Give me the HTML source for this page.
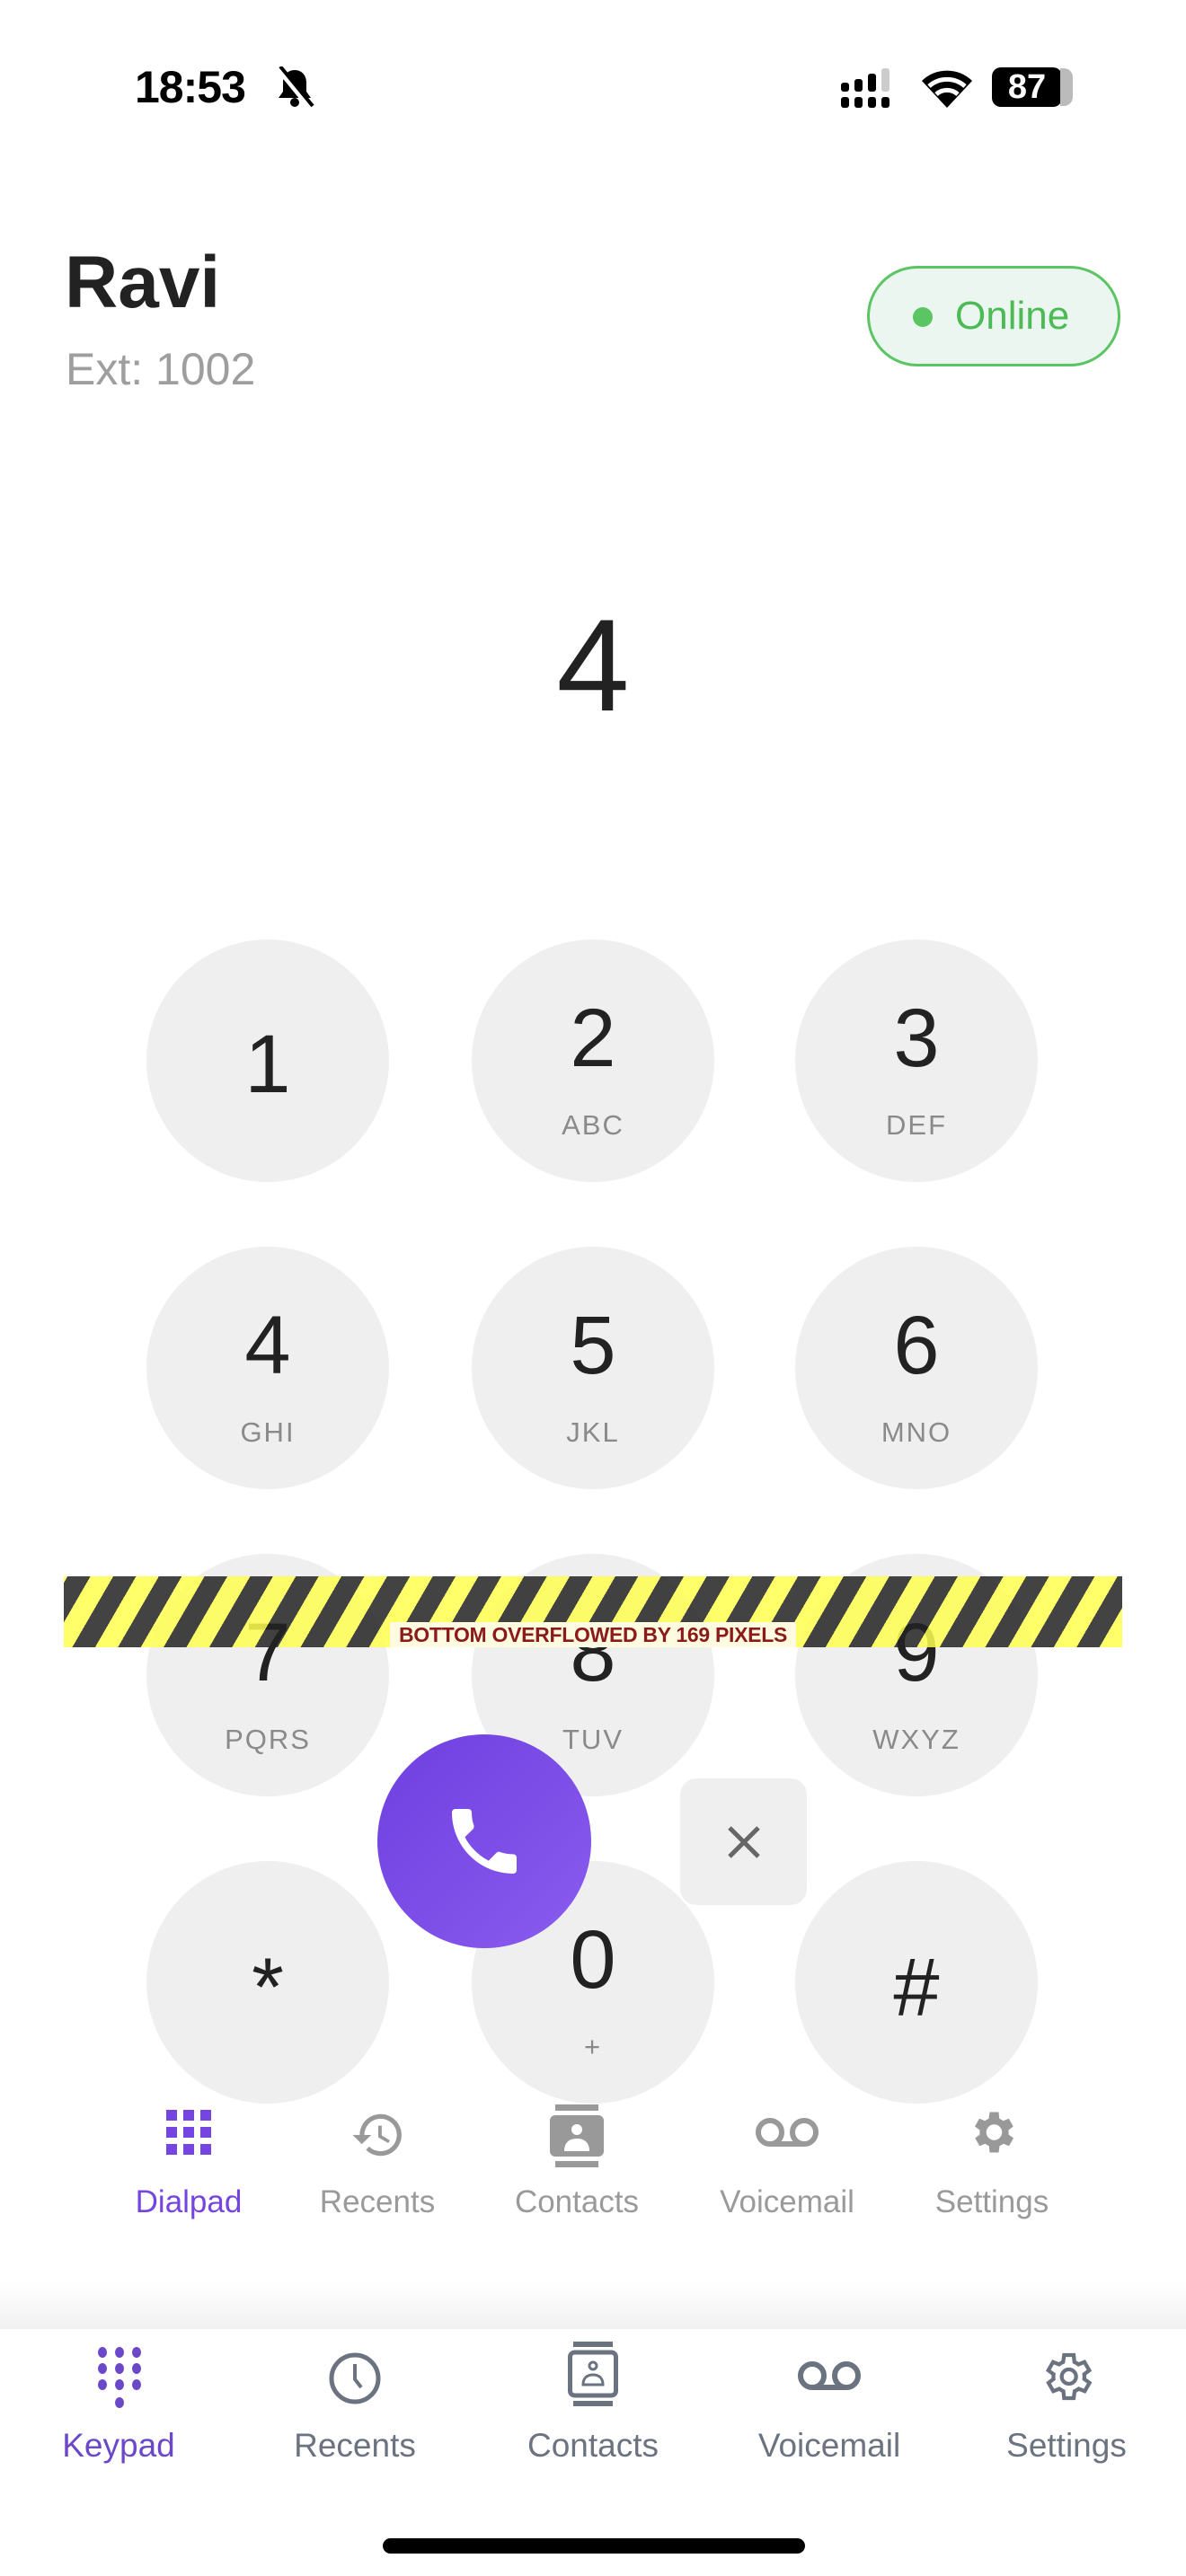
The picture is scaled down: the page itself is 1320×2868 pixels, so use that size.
<!DOCTYPE html>
<html><head><meta charset="utf-8"><style>
*{margin:0;padding:0;box-sizing:border-box}
body{width:1320px;height:2868px;background:#fff;position:relative;overflow:hidden;font-family:"Liberation Sans",sans-serif}
.a{position:absolute}
.key{position:absolute;width:270px;height:270px;border-radius:50%;background:#efefef}
.d{position:absolute;left:0;width:270px;text-align:center;font-size:92px;color:#222;line-height:1}
.l{position:absolute;left:0;width:270px;text-align:center;font-size:31px;color:#8a8a8a;letter-spacing:2px;line-height:1}
.nl{position:absolute;width:260px;text-align:center;font-size:35px;color:#9a9a9a;line-height:1}
.bl{position:absolute;width:260px;text-align:center;font-size:37px;color:#6b7280;line-height:1}
</style></head><body>
<!-- status bar -->
<div class="a" style="left:150px;top:68px;font-size:50px;font-weight:bold;color:#000;letter-spacing:-1px">18:53</div>
<svg class="a" style="left:306px;top:74px" width="44" height="46" viewBox="0 0 44 46"><path d="M22 4c-8 0-13 6-13 14v10l-5 7h36l-5-7V18C35 10 30 4 22 4z" fill="#000"/><circle cx="22" cy="40" r="5" fill="#000"/><line x1="4" y1="2" x2="40" y2="46" stroke="#fff" stroke-width="7"/><line x1="6" y1="0" x2="42" y2="44" stroke="#000" stroke-width="4"/></svg>
<svg class="a" style="left:936px;top:76px" width="70" height="44" viewBox="0 0 70 44">
<g fill="#000"><rect x="0" y="16" width="9" height="10" rx="3"/><rect x="0" y="32" width="9" height="12" rx="3"/><rect x="15" y="12" width="9" height="14" rx="3"/><rect x="15" y="32" width="9" height="12" rx="3"/><rect x="30" y="6" width="9" height="20" rx="3"/><rect x="30" y="32" width="9" height="12" rx="3"/><rect x="45" y="32" width="9" height="12" rx="3"/></g><rect x="45" y="0" width="9" height="26" rx="3" fill="#ccc"/></svg>
<svg class="a" style="left:1024px;top:76px" width="60" height="44" viewBox="0 0 60 44"><path d="M30 44 L2 14 A40 40 0 0 1 58 14 Z" fill="#000"/><path d="M10 20 A30 30 0 0 1 50 20" stroke="#fff" stroke-width="5" fill="none"/><path d="M18 29 A18 18 0 0 1 42 29" stroke="#fff" stroke-width="5" fill="none"/></svg>
<div class="a" style="left:1104px;top:75px;width:78px;height:44px;background:#000;border-radius:10px;color:#fff;font-weight:bold;font-size:38px;text-align:center;line-height:44px">87</div>
<div class="a" style="left:1180px;top:76px;width:14px;height:42px;background:#bbb;border-radius:0 10px 10px 0"></div>
<!-- header -->
<div class="a" style="left:72px;top:274px;font-size:82px;font-weight:bold;color:#222;line-height:1">Ravi</div>
<div class="a" style="left:73px;top:386px;font-size:50px;color:#9e9e9e;line-height:1">Ext: 1002</div>
<div class="a" style="left:965px;top:296px;width:282px;height:112px;border:3px solid #5cc563;border-radius:56px;background:#eaf6ef"></div>
<div class="a" style="left:1016px;top:342px;width:22px;height:22px;border-radius:50%;background:#5cc563"></div>
<div class="a" style="left:1063px;top:330px;font-size:44px;color:#4cbb55;line-height:1">Online</div>
<!-- number -->
<div class="a" style="left:460px;top:668px;width:400px;text-align:center;font-size:146px;color:#222;line-height:1">4</div>
<!-- keys -->
<div class="key" style="left:163px;top:1046px"><div class="d" style="top:93px">1</div></div>
<div class="key" style="left:525px;top:1046px"><div class="d" style="top:64px">2</div><div class="l" style="top:191px">ABC</div></div>
<div class="key" style="left:885px;top:1046px"><div class="d" style="top:64px">3</div><div class="l" style="top:191px">DEF</div></div>
<div class="key" style="left:163px;top:1388px"><div class="d" style="top:64px">4</div><div class="l" style="top:191px">GHI</div></div>
<div class="key" style="left:525px;top:1388px"><div class="d" style="top:64px">5</div><div class="l" style="top:191px">JKL</div></div>
<div class="key" style="left:885px;top:1388px"><div class="d" style="top:64px">6</div><div class="l" style="top:191px">MNO</div></div>
<div class="key" style="left:163px;top:1730px"><div class="d" style="top:64px">7</div><div class="l" style="top:191px">PQRS</div></div>
<div class="key" style="left:525px;top:1730px"><div class="d" style="top:64px">8</div><div class="l" style="top:191px">TUV</div></div>
<div class="key" style="left:885px;top:1730px"><div class="d" style="top:64px">9</div><div class="l" style="top:191px">WXYZ</div></div>
<div class="key" style="left:163px;top:2072px"><div class="d" style="top:95px">*</div></div>
<div class="key" style="left:525px;top:2072px"><div class="d" style="top:64px">0</div><div class="l" style="top:191px">+</div></div>
<div class="key" style="left:885px;top:2072px"><div class="d" style="top:95px">#</div></div>
<!-- overflow bar -->
<div class="a" style="left:71px;top:1755px;width:1178px;height:79px;opacity:.85;background:repeating-linear-gradient(-60deg,#ffff50 0 22px,#222 22px 44px)"></div>
<div class="a" style="left:434px;top:1806px;width:452px;height:28px;background:#fffbe0;color:#8b1a1a;font-weight:bold;font-size:23px;letter-spacing:-0.3px;text-align:center;line-height:28px;white-space:nowrap">BOTTOM OVERFLOWED BY 169 PIXELS</div>
<!-- call & backspace -->
<div class="a" style="left:420px;top:1931px;width:238px;height:238px;border-radius:50%;background:linear-gradient(135deg,#6f3fe0,#8a5cee)"></div>
<svg class="a" style="left:491px;top:2002px" width="96" height="96" viewBox="0 0 24 24"><path fill="#fff" d="M6.6 10.8c1.4 2.8 3.8 5.1 6.6 6.6l2.2-2.2c.3-.3.7-.4 1-.2 1.1.4 2.3.6 3.6.6.6 0 1 .4 1 1V20c0 .6-.4 1-1 1C10.6 21 3 13.4 3 4c0-.6.4-1 1-1h3.5c.6 0 1 .4 1 1 0 1.3.2 2.5.6 3.6.1.3 0 .7-.2 1L6.6 10.8z"/></svg>
<div class="a" style="left:757px;top:1980px;width:141px;height:141px;border-radius:18px;background:#efefef"></div>
<svg class="a" style="left:806px;top:2029px" width="44" height="44" viewBox="0 0 44 44"><path d="M6 6L38 38M38 6L6 38" stroke="#666" stroke-width="5"/></svg>
<!-- inner nav -->
<svg class="a" style="left:185px;top:2349px" width="50" height="50" viewBox="0 0 50 50"><g fill="#7445e0"><rect x="0" y="0" width="12" height="12"/><rect x="19" y="0" width="12" height="12"/><rect x="38" y="0" width="12" height="12"/><rect x="0" y="19" width="12" height="12"/><rect x="19" y="19" width="12" height="12"/><rect x="38" y="19" width="12" height="12"/><rect x="0" y="38" width="12" height="12"/><rect x="19" y="38" width="12" height="12"/><rect x="38" y="38" width="12" height="12"/></g></svg>
<svg class="a" style="left:388px;top:2346px" width="66" height="62" viewBox="0 0 24 24"><path fill="#999" d="M13 3a9 9 0 0 0-9 9H1l3.9 3.9L9 12H6a7 7 0 1 1 2.1 5l-1.4 1.4A9 9 0 1 0 13 3zm-1 5v5l4.3 2.5.7-1.2-3.5-2.1V8z"/></svg>
<svg class="a" style="left:612px;top:2343px" width="60" height="70" viewBox="0 0 60 70"><rect x="6" y="0" width="48" height="7" fill="#999"/><rect x="6" y="63" width="48" height="7" fill="#999"/><rect x="0" y="12" width="60" height="46" rx="6" fill="#999"/><circle cx="30" cy="28" r="6" fill="#fff"/><path d="M16 52c0-10 6-14 14-14s14 4 14 14z" fill="#fff"/></svg>
<svg class="a" style="left:840px;top:2355px" width="72" height="40" viewBox="0 0 72 40"><circle cx="17" cy="19" r="13" stroke="#999" stroke-width="6" fill="none"/><circle cx="55" cy="19" r="13" stroke="#999" stroke-width="6" fill="none"/><line x1="17" y1="32" x2="55" y2="32" stroke="#999" stroke-width="6"/></svg>
<svg class="a" style="left:1074px;top:2344px" width="60" height="60" viewBox="0 0 24 24"><path fill="#999" d="M19.4 13a7.5 7.5 0 0 0 0-2l2.1-1.6-2-3.5-2.5 1a7.6 7.6 0 0 0-1.7-1L15 3h-4l-.4 2.9a7.6 7.6 0 0 0-1.7 1l-2.5-1-2 3.5L6.6 11a7.5 7.5 0 0 0 0 2l-2.1 1.6 2 3.5 2.5-1a7.6 7.6 0 0 0 1.7 1L11 21h4l.4-2.9a7.6 7.6 0 0 0 1.7-1l2.5 1 2-3.5zM13 15.5a3.5 3.5 0 1 1 0-7 3.5 3.5 0 0 1 0 7z"/></svg>
<div class="nl" style="left:80px;top:2434px;color:#7445e0">Dialpad</div>
<div class="nl" style="left:290px;top:2434px">Recents</div>
<div class="nl" style="left:512px;top:2434px">Contacts</div>
<div class="nl" style="left:746px;top:2434px">Voicemail</div>
<div class="nl" style="left:974px;top:2434px">Settings</div>
<!-- bottom bar -->
<div class="a" style="left:0;top:2540px;width:1320px;height:53px;background:linear-gradient(#fff,#f1f1f1)"></div>
<div class="a" style="left:0;top:2593px;width:1320px;height:275px;background:#fff"></div>
<svg class="a" style="left:108px;top:2612px" width="50" height="72" viewBox="0 0 50 72"><g fill="#6a48c8"><ellipse cx="6" cy="7" rx="5" ry="6"/><ellipse cx="25" cy="7" rx="5" ry="6"/><ellipse cx="44" cy="7" rx="5" ry="6"/><ellipse cx="6" cy="25" rx="5" ry="6"/><ellipse cx="25" cy="25" rx="5" ry="6"/><ellipse cx="44" cy="25" rx="5" ry="6"/><ellipse cx="6" cy="43" rx="5" ry="6"/><ellipse cx="25" cy="43" rx="5" ry="6"/><ellipse cx="44" cy="43" rx="5" ry="6"/><ellipse cx="25" cy="63" rx="5" ry="6"/></g></svg>
<svg class="a" style="left:365px;top:2618px" width="60" height="60" viewBox="0 0 60 60"><circle cx="30" cy="30" r="26" stroke="#6b7280" stroke-width="5" fill="none"/><path d="M30 14v17l7 9" stroke="#6b7280" stroke-width="4" fill="none"/></svg>
<svg class="a" style="left:632px;top:2607px" width="56" height="72" viewBox="0 0 56 72"><rect x="6" y="0" width="44" height="6" fill="#6b7280"/><rect x="6" y="66" width="44" height="6" fill="#6b7280"/><rect x="2.5" y="12" width="51" height="48" rx="5" stroke="#6b7280" stroke-width="5" fill="none"/><circle cx="28" cy="27" r="4" stroke="#6b7280" stroke-width="3" fill="none"/><path d="M17 48c0-8 5-11 11-11s11 3 11 11z" stroke="#6b7280" stroke-width="3" fill="none"/></svg>
<svg class="a" style="left:887px;top:2624px" width="72" height="44" viewBox="0 0 72 44"><circle cx="17" cy="21" r="13" stroke="#6b7280" stroke-width="6" fill="none"/><circle cx="55" cy="21" r="13" stroke="#6b7280" stroke-width="6" fill="none"/><line x1="17" y1="34" x2="55" y2="34" stroke="#6b7280" stroke-width="6"/></svg>
<svg class="a" style="left:1155px;top:2614px" width="64" height="64" viewBox="0 0 24 24"><path fill="none" stroke="#6b7280" stroke-width="1.6" d="M19.4 13a7.5 7.5 0 0 0 0-2l2.1-1.6-2-3.5-2.5 1a7.6 7.6 0 0 0-1.7-1L15 3h-4l-.4 2.9a7.6 7.6 0 0 0-1.7 1l-2.5-1-2 3.5L6.6 11a7.5 7.5 0 0 0 0 2l-2.1 1.6 2 3.5 2.5-1a7.6 7.6 0 0 0 1.7 1L11 21h4l.4-2.9a7.6 7.6 0 0 0 1.7-1l2.5 1 2-3.5z"/><circle cx="13" cy="12" r="3" fill="none" stroke="#6b7280" stroke-width="1.6"/></svg>
<div class="bl" style="left:2px;top:2704px;color:#6a48c8">Keypad</div>
<div class="bl" style="left:265px;top:2704px">Recents</div>
<div class="bl" style="left:530px;top:2704px">Contacts</div>
<div class="bl" style="left:793px;top:2704px">Voicemail</div>
<div class="bl" style="left:1057px;top:2704px">Settings</div>
<div class="a" style="left:426px;top:2826px;width:470px;height:17px;border-radius:9px;background:#000"></div>
</body></html>
